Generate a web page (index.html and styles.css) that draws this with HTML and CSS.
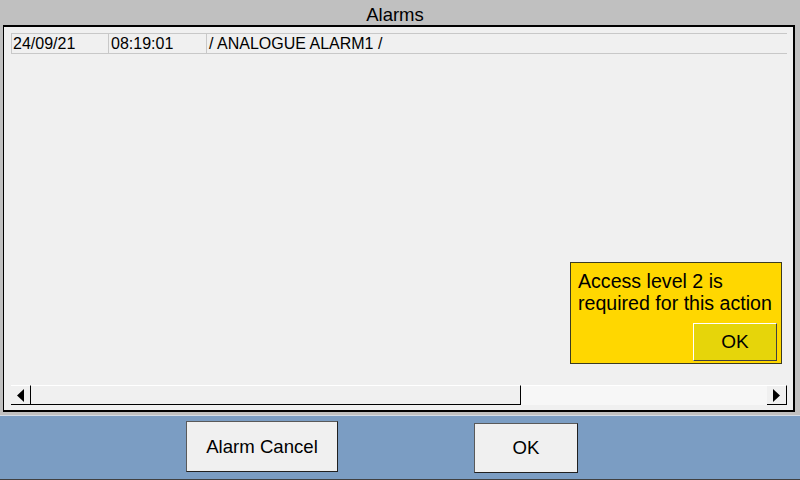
FILE: index.html
```
<!DOCTYPE html>
<html lang="en">
<head>
    <meta charset="UTF-8">
    <title>Alarms</title>
    <link rel="stylesheet" href="styles.css">
</head>
<body>
    <div class="title">Alarms</div>

    <div class="panel">
        <div class="alarm-list">
            <div class="alarm-row">
                <span class="cell cell-date">24/09/21</span>
                <span class="cell cell-time">08:19:01</span>
                <span class="cell cell-text">/ ANALOGUE ALARM1 /</span>
            </div>
        </div>

        <div class="hscroll">
            <div class="sb-btn">
                <svg width="7" height="13" viewBox="0 0 7 13"><polygon points="7,0 0,6.5 7,13" fill="#000"/></svg>
            </div>
            <div class="sb-thumb"></div>
            <div class="sb-track"></div>
            <div class="sb-btn">
                <svg width="7" height="13" viewBox="0 0 7 13"><polygon points="0,0 7,6.5 0,13" fill="#000"/></svg>
            </div>
        </div>

        <div class="access-popup">
            <p class="access-msg">Access level 2 is<br>required for this action</p>
            <button class="popup-ok">OK</button>
        </div>
    </div>

    <div class="button-bar">
        <button class="bar-btn btn-cancel">Alarm Cancel</button>
        <button class="bar-btn btn-ok">OK</button>
    </div>
</body>
</html>
```

FILE: styles.css
```
body {
    margin: 0;
    width: 800px;
    height: 480px;
    overflow: hidden;
    background-color: #c0c0c0;
    font-family: 'Liberation Sans', Arial, sans-serif;
    color: #000;
    display: flex;
    flex-direction: column;
}

.title {
    height: 21px;
    padding: 4px 10px 0 0;
    line-height: 21px;
    font-size: 18.5px;
    text-align: center;
}

.panel {
    position: relative;
    height: 372px;
    margin: 0 5px 0 3px;
    padding: 6px 6px 5px 7px;
    background-color: #f0f0f0;
    border-style: solid;
    border-color: #000;
    border-width: 2px 2px 2px 1px;
    display: flex;
    flex-direction: column;
}

.alarm-list {
    flex: 1;
}

.alarm-row {
    display: flex;
    height: 19px;
    border: 1px solid #c8c8c8;
    border-right: none;
    font-size: 16px;
    line-height: 19px;
}

.cell {
    white-space: nowrap;
}

.cell-date {
    width: 95px;
    padding-left: 1px;
    border-right: 1px solid #c8c8c8;
}

.cell-time {
    width: 95px;
    padding-left: 2px;
    border-right: 1px solid #c8c8c8;
}

.cell-text {
    flex: 1;
    padding-left: 2px;
}

/* horizontal scroll bar */
.hscroll {
    display: flex;
    height: 20px;
}

.sb-btn {
    width: 19px;
    height: 18px;
    background-color: #f0f0f0;
    border-top: 1px solid #fff;
    border-right: 1px solid #000;
    border-bottom: 1px solid #000;
    display: flex;
    align-items: center;
    justify-content: center;
}

.sb-thumb {
    width: 489px;
    height: 18px;
    background-color: #f0f0f0;
    border-top: 1px solid #fff;
    border-right: 1px solid #000;
    border-bottom: 1px solid #000;
}

.sb-track {
    flex: 1;
    height: 19px;
    background-color: #f7f7f7;
    border-top: 1px solid #fff;
}

/* access level popup */
.access-popup {
    position: absolute;
    left: 566px;
    top: 235px;
    width: 210px;
    height: 100px;
    box-sizing: content-box;
    background-color: #ffd700;
    border: 1px solid #3c3c20;
    display: flex;
    flex-direction: column;
    align-items: flex-end;
}

.access-msg {
    align-self: stretch;
    margin: 0;
    padding: 7px 0 0 7px;
    font-size: 19.6px;
    line-height: 22px;
    white-space: nowrap;
}

.popup-ok {
    width: 84px;
    height: 38px;
    margin: 9px 4px 0 0;
    padding: 0;
    background-color: #e6d50a;
    border-style: solid;
    border-width: 1px;
    border-color: #fff #404040 #404040 #fff;
    font-family: inherit;
    font-size: 19px;
    color: #000;
}

/* bottom button bar */
.button-bar {
    height: 63px;
    margin-top: 3px;
    background-color: #7b9dc3;
    border-top: 1px solid #d4dce6;
    border-bottom: 1px solid #404040;
    display: flex;
    align-items: flex-start;
}

.bar-btn {
    padding: 0;
    background-color: #f0f0f0;
    border-style: solid;
    border-width: 1px;
    border-color: #5a5a5a #202020 #202020 #5a5a5a;
    font-family: inherit;
    font-size: 18.6px;
    color: #000;
}

.btn-cancel {
    width: 152px;
    height: 51px;
    margin: 5px 0 0 186px;
}

.btn-ok {
    width: 104px;
    height: 50px;
    margin: 7px 0 0 136px;
}
```
